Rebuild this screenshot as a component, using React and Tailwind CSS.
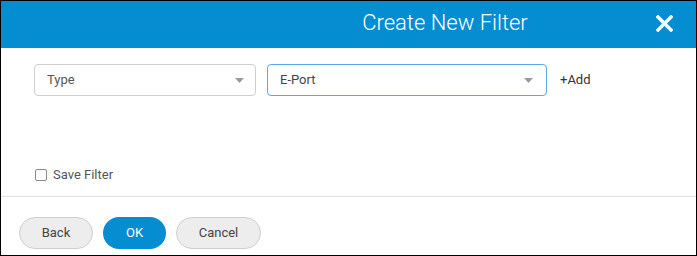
import React from "react";

function Caret() {
  return (
    <svg width="9" height="5" viewBox="0 0 9 5" className="shrink-0">
      <path d="M0 0 L9 0 L4.5 5 Z" fill="#9a9a9a" />
    </svg>
  );
}

export default function App() {
  return (
    <div
      className="w-[697px] h-[256px] border border-black bg-white flex flex-col overflow-hidden"
      style={{ fontFamily: "Roboto, 'Liberation Sans', sans-serif" }}
    >
      <div className="h-[47px] bg-[#058dd1] flex items-center shrink-0">
        <div className="flex-1 pl-[253px] pb-[3px] text-center text-white text-[22px] font-light leading-none">
          Create New Filter
        </div>
        <div className="w-[60px] flex items-center justify-center pr-[4px] pb-[3px]">
          <svg width="17" height="17" viewBox="0 0 17 17">
            <path d="M2 2 L15 15 M15 2 L2 15" stroke="white" strokeWidth="3.4" strokeLinecap="square" />
          </svg>
        </div>
      </div>
      <div className="flex-1 flex flex-col px-[33px]">
        <div className="flex items-center mt-[16px]">
          <div className="w-[222px] h-[32px] border border-[#cfcfcf] rounded-[4px] flex items-center justify-between pl-[12px] pr-[11px] text-[13px] text-[#555]">
            <span>Type</span>
            <Caret />
          </div>
          <div className="ml-[11px] w-[280px] h-[32px] border border-[#5aa8e4] rounded-[4px] flex items-center justify-between pl-[12px] pr-[13px] text-[13px] text-[#444]">
            <span>E-Port</span>
            <Caret />
          </div>
          <span className="ml-[13px] text-[13px] text-[#333]">+Add</span>
        </div>
        <div className="flex items-center mt-[69px] ml-[1px]">
          <div className="w-[12px] h-[12px] border border-[#8a8a8a] rounded-[2px] bg-white" />
          <span className="ml-[6px] text-[13px] text-[#555]">Save Filter</span>
        </div>
      </div>
      <div className="border-t border-[#e2e2e2] h-[59px] shrink-0 flex items-start gap-[10px] pl-[18px] pt-[20px]">
        <button className="w-[74px] h-[32px] rounded-full border border-[#cfcfcf] bg-[#ededed] text-[13px] text-[#444]">
          Back
        </button>
        <button className="w-[63px] h-[32px] rounded-full bg-[#058dd1] text-[13px] text-white">
          OK
        </button>
        <button className="w-[85px] h-[32px] rounded-full border border-[#cfcfcf] bg-[#ededed] text-[13px] text-[#444]">
          Cancel
        </button>
      </div>
    </div>
  );
}
